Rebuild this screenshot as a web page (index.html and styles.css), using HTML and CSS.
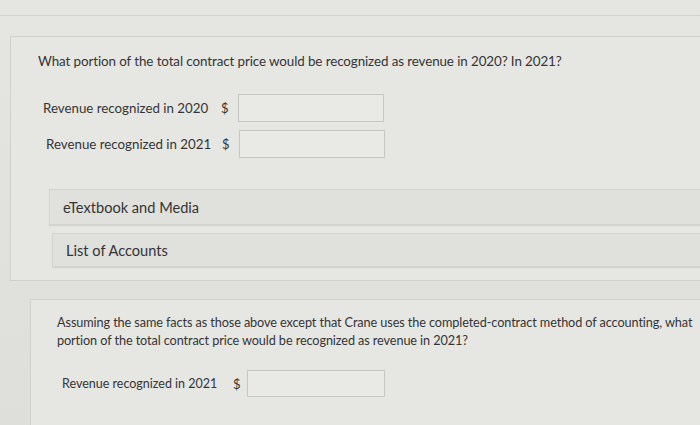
FILE: index.html
```html
<!DOCTYPE html>
<html>
<head>
<meta charset="utf-8">
<link rel="stylesheet" href="styles.css">
</head>
<body>
<div class="topstrip"></div>
<section class="card card-first">
  <p class="question">What portion of the total contract price would be recognized as revenue in 2020? In 2021?</p>
  <div class="rows">
    <div class="row row-a"><span class="label">Revenue recognized in 2020</span><span class="dollar">$</span><span class="input"></span></div>
    <div class="row row-b"><span class="label">Revenue recognized in 2021</span><span class="dollar">$</span><span class="input"></span></div>
  </div>
  <div class="buttons">
    <div class="btn btn-a">eTextbook and Media</div>
    <div class="btn btn-b">List of Accounts</div>
  </div>
</section>
<section class="card card-second">
  <p class="question small">Assuming the same facts as those above except that Crane uses the completed-contract method of accounting, what portion of the total contract price would be recognized as revenue in 2021?</p>
  <div class="row row-c"><span class="label">Revenue recognized in 2021</span><span class="dollar">$</span><span class="input"></span></div>
</section>
</body>
</html>
```
FILE: styles.css
```css
html, body {
  margin: 0;
  padding: 0;
}
body {
  width: 700px;
  height: 425px;
  overflow: hidden;
  background: linear-gradient(180deg, #e5e5e2 0%, #e1e2de 50%, #dedfdb 100%);
  font-family: Lato, "Open Sans", sans-serif;
  color: #353535;
}
.topstrip {
  height: 15px;
  border-bottom: 1px solid #d2d2ce;
}
.card {
  background: #e6e6e3;
  border: 1px solid #d0d0cc;
  border-right: none;
}
.card-first {
  margin: 20px 0 0 10px;
  padding: 15px 0 13px 0;
}
.question {
  margin: 0 0 0 27px;
  font-size: 13.4px;
  line-height: 18px;
  letter-spacing: -0.1px;
}
.rows {
  margin-top: 24px;
  display: flex;
  flex-direction: column;
  gap: 8px;
}
.row {
  display: flex;
  align-items: center;
}
.row-a { margin-left: 32px; }
.row-b { margin-left: 35px; }
.label {
  font-size: 13.3px;
  width: 178px;
}
.row-b .label { width: 176px; }
.dollar {
  font-size: 13px;
  width: 17px;
}
.input {
  display: block;
  width: 144px;
  height: 26px;
  border: 1px solid #c6c7c2;
  background: #e9eae6;
}
.buttons {
  margin-top: 31px;
  display: flex;
  flex-direction: column;
  gap: 8px;
}
.btn {
  height: 34px;
  display: flex;
  align-items: center;
  padding-left: 13px;
  font-size: 14.6px;
  background: #e0e0dd;
  border: 1px solid #d3d3cf;
  border-right: none;
  box-shadow: 0 1px 1px rgba(0,0,0,0.08);
}
.btn-a { margin-left: 38px; }
.btn-b { margin-left: 41px; height: 32px; }
.card-second {
  margin: 18px 0 0 30px;
  padding: 13px 0 26px 0;
  height: 90px;
}
.question.small {
  margin-left: 26px;
  margin-right: 0;
  max-width: 636px;
  font-size: 12.7px;
  line-height: 18px;
  letter-spacing: -0.1px;
}
.row-c {
  margin-top: 21px;
  margin-left: 31px;
}
.row-c .label {
  font-size: 12.5px;
  width: 171px;
}
.row-c .dollar { width: 14px; }
.row-c .input {
  width: 136px;
  height: 25px;
}
```
